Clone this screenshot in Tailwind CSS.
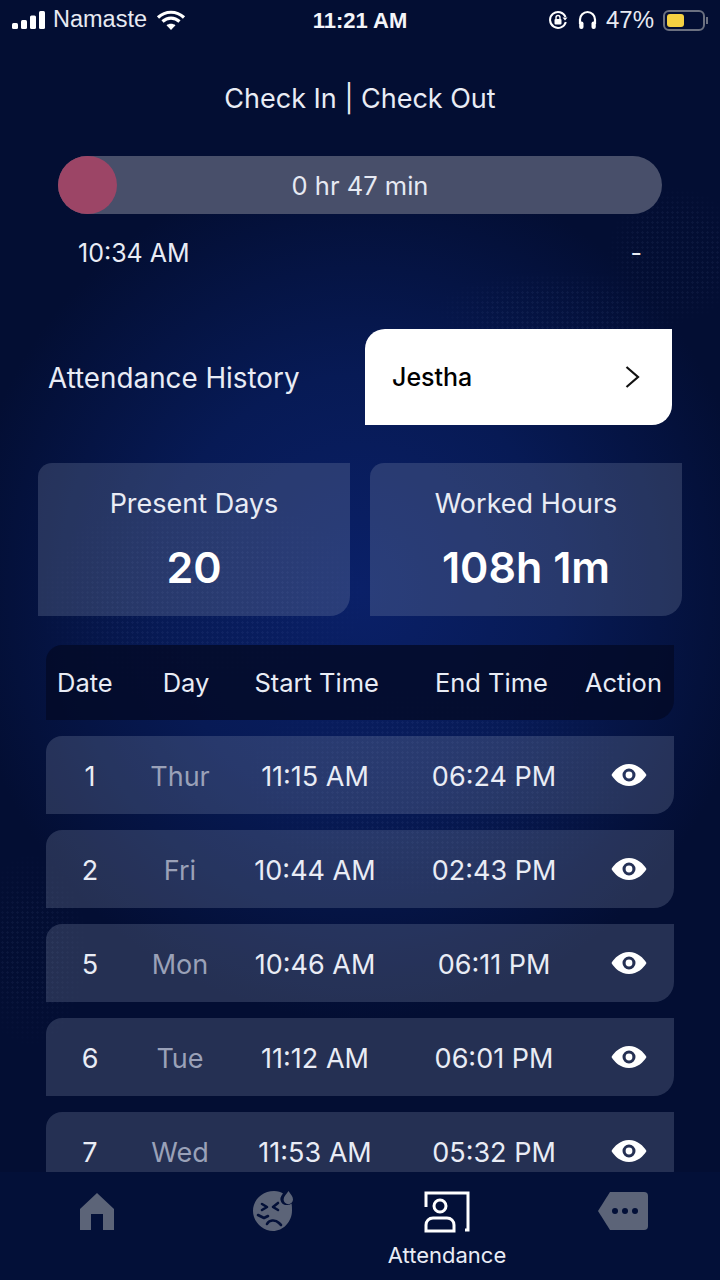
<!DOCTYPE html>
<html lang="en">
  <head>
    <meta charset="UTF-8" />
    <meta name="viewport" content="width=device-width, initial-scale=1.0" />
    <title>Attendance</title>
    <script src="https://cdn.jsdelivr.net/npm/@tailwindcss/browser@4"></script>
  </head>
  <body class="bg-[#030d30]">
    <div class="w-[720px] h-[1280px] relative overflow-hidden flex flex-col text-white font-['Inter',sans-serif] bg-[radial-gradient(ellipse_400px_430px_at_360px_590px,#0a2068_0%,#071a55_50%,#030e33_100%)]">
      <!-- faint dotted world map behind everything -->
      <div class="absolute inset-0 bg-[radial-gradient(circle,#8fa4e0_1.2px,transparent_1.3px)] bg-[size:5px_5px] opacity-[0.06] [mask-image:radial-gradient(ellipse_70px_70px_at_675px_255px,#000_60%,transparent),radial-gradient(ellipse_130px_40px_at_560px_310px,#000_50%,transparent),radial-gradient(ellipse_170px_110px_at_200px_600px,#000_50%,transparent),radial-gradient(ellipse_200px_120px_at_440px_780px,#000_50%,transparent),radial-gradient(ellipse_60px_100px_at_30px_950px,#000_40%,transparent)]"></div>

      <!-- status bar -->
      <div class="h-[40px] shrink-0 relative flex items-center px-[12px] text-[23.5px] font-['Liberation_Sans',sans-serif]">
        <svg width="34" height="20" viewBox="0 0 34 20" fill="#fff"><rect x="0" y="13" width="6" height="6" rx="1.5"/><rect x="9" y="10" width="6" height="9" rx="1.5"/><rect x="18" y="5.5" width="6" height="13.5" rx="1.5"/><rect x="27" y="1" width="6" height="18" rx="1.5"/></svg>
        <span class="ml-[7px] text-[#e8eaf2]">Namaste</span>
        <svg class="ml-[9px]" width="30" height="22" viewBox="0 0 30 22" fill="none" stroke="#fff" stroke-width="3.2"><path d="M2 8.500C9.500 1.500 20.500 1.500 28 8.500"/><path d="M6.500 12.500C11.500 8 18.500 8 23.500 12.500"/><path d="M15 21l-4.500-4.800c2.600-2 6.400-2 9 0z" fill="#fff" stroke="none"/></svg>
        <span class="absolute left-0 w-[720px] text-center font-bold text-[22px] text-[#f4f5fa]">11:21 AM</span>
        <div class="ml-auto flex items-center">
          <svg width="20" height="20" viewBox="0 0 20 20" fill="none" stroke="#fff" stroke-width="2"><path d="M17.500 7A8 8 0 1 0 17.800 12"/><path d="M14.500 7.500h5l-2.500 3z" fill="#fff" stroke="none"/><rect x="6.500" y="9" width="7" height="5.500" rx="1" fill="#fff" stroke="none"/><path d="M8 9V7.500a2 2 0 0 1 4 0V9" stroke-width="1.400"/></svg>
          <svg class="ml-[10px]" width="19" height="20" viewBox="0 0 19 20" fill="none" stroke="#fff" stroke-width="2.200"><path d="M2 14V9.500a7.500 7.500 0 0 1 15 0V14"/><rect x="1.200" y="11.500" width="4.300" height="7.500" rx="2" fill="#fff" stroke="none"/><rect x="13.500" y="11.500" width="4.300" height="7.500" rx="2" fill="#fff" stroke="none"/></svg>
          <span class="ml-[9px] text-[24px] text-[#e8eaf2]">47%</span>
          <div class="ml-[9px] w-[42px] h-[21px] rounded-[6px] border-2 border-[#6b7080] p-[2px]">
            <div class="w-[17px] h-full rounded-[3px] bg-[#f5d142]"></div>
          </div>
          <div class="ml-[1px] w-[2px] h-[7px] bg-[#6b7080]"></div>
        </div>
      </div>

      <h1 class="relative mt-[41px] h-[36px] text-center text-[27px] leading-[36px] font-normal text-[#e9ecf5]">Check In | Check Out</h1>

      <!-- slider -->
      <div class="mt-[39px] mx-[58px] h-[58px] shrink-0 rounded-full bg-[#484f6a] relative flex items-center justify-center">
        <div class="absolute left-0 top-0 w-[59px] h-[58px] rounded-full bg-[#9c4566]"></div>
        <span class="relative top-[1px] text-[25.500px] text-[#e6e9f2]">0 hr 47 min</span>
      </div>
      <div class="relative mt-[24px] mx-[78px] h-[32px] flex justify-between items-center text-[25px] text-[#e9ecf5]">
        <span>10:34 AM</span><span>-</span>
      </div>

      <!-- history header -->
      <div class="relative mt-[59px] h-[96px] shrink-0 flex items-center pl-[48px]">
        <span class="w-[317px] pt-[3px] text-[27.800px] text-[#e9ecf5]">Attendance History</span>
        <div class="w-[307px] h-[96px] bg-white rounded-tl-[20px] rounded-br-[20px] flex items-center justify-between pl-[27px] pr-[32px] text-black">
          <span class="pt-[2px] text-[25px] font-medium">Jestha</span>
          <svg width="16" height="24" viewBox="0 0 16 24" fill="none" stroke="#111" stroke-width="2.200"><path d="M2.500 2l11.500 10L2.500 22"/></svg>
        </div>
      </div>

      <!-- summary cards -->
      <div class="relative mt-[38px] mx-[38px] h-[153px] shrink-0 grid grid-cols-[312px_312px] gap-[20px]">
        <div class="bg-[#8c96b4]/25 rounded-tl-[14px] rounded-br-[20px] flex flex-col items-center pt-[23px]">
          <span class="text-[27px] leading-[36px] text-[#e9ecf5]">Present Days</span>
          <span class="mt-[16px] text-[43px] leading-[58px] font-semibold">20</span>
        </div>
        <div class="bg-[#8c96b4]/25 rounded-tl-[14px] rounded-br-[20px] flex flex-col items-center pt-[23px]">
          <span class="text-[27px] leading-[36px] text-[#e9ecf5]">Worked Hours</span>
          <span class="mt-[16px] text-[43px] leading-[58px] font-semibold">108h 1m</span>
        </div>
      </div>

      <!-- table -->
      <div class="mt-[29px] mx-[46px] h-[75px] shrink-0 bg-[#040a28]/85 rounded-tl-[16px] rounded-br-[20px] flex items-center pt-[1px] whitespace-nowrap text-[25.500px] text-[#e9ecf5] relative">
        <span class="ml-[11px]">Date</span>
        <span class="ml-[50px]">Day</span>
        <span class="ml-[45px]">Start Time</span>
        <span class="ml-[56px]">End Time</span>
        <span class="ml-[37px]">Action</span>
      </div>

      <div class="relative mt-[16px] mx-[46px] h-[436px] overflow-hidden flex flex-col gap-[16px] shrink-0">
        <div class="h-[78px] shrink-0 bg-[#8c96b4]/25 rounded-tl-[16px] rounded-br-[20px] grid grid-cols-[88px_92px_178px_180px_90px] items-center text-center pt-[4px] text-[27px] text-[#e9ecf5]">
          <span>1</span><span class="text-[#9aa1b8]">Thur</span><span>11:15 AM</span><span>06:24 PM</span>
          <svg class="mx-auto mb-[4px]" width="36" height="24" viewBox="0 0 36 24"><path fill="#fff" fill-rule="evenodd" d="M18 1C9.500 1 3.500 7 .5 12c3 5 9 11 17.500 11s14.500-6 17.500-11C32.500 7 26.500 1 18 1zm0 4.500a6.500 6.500 0 1 1 0 13 6.500 6.500 0 0 1 0-13z"/><circle cx="18" cy="12" r="3.400" fill="#fff"/></svg>
        </div>
        <div class="h-[78px] shrink-0 bg-[#8c96b4]/25 rounded-tl-[16px] rounded-br-[20px] grid grid-cols-[88px_92px_178px_180px_90px] items-center text-center pt-[4px] text-[27px] text-[#e9ecf5]">
          <span>2</span><span class="text-[#9aa1b8]">Fri</span><span>10:44 AM</span><span>02:43 PM</span>
          <svg class="mx-auto mb-[4px]" width="36" height="24" viewBox="0 0 36 24"><path fill="#fff" fill-rule="evenodd" d="M18 1C9.500 1 3.500 7 .5 12c3 5 9 11 17.500 11s14.500-6 17.500-11C32.500 7 26.500 1 18 1zm0 4.500a6.500 6.500 0 1 1 0 13 6.500 6.500 0 0 1 0-13z"/><circle cx="18" cy="12" r="3.400" fill="#fff"/></svg>
        </div>
        <div class="h-[78px] shrink-0 bg-[#8c96b4]/25 rounded-tl-[16px] rounded-br-[20px] grid grid-cols-[88px_92px_178px_180px_90px] items-center text-center pt-[4px] text-[27px] text-[#e9ecf5]">
          <span>5</span><span class="text-[#9aa1b8]">Mon</span><span>10:46 AM</span><span>06:11 PM</span>
          <svg class="mx-auto mb-[4px]" width="36" height="24" viewBox="0 0 36 24"><path fill="#fff" fill-rule="evenodd" d="M18 1C9.500 1 3.500 7 .5 12c3 5 9 11 17.500 11s14.500-6 17.500-11C32.500 7 26.500 1 18 1zm0 4.500a6.500 6.500 0 1 1 0 13 6.500 6.500 0 0 1 0-13z"/><circle cx="18" cy="12" r="3.400" fill="#fff"/></svg>
        </div>
        <div class="h-[78px] shrink-0 bg-[#8c96b4]/25 rounded-tl-[16px] rounded-br-[20px] grid grid-cols-[88px_92px_178px_180px_90px] items-center text-center pt-[4px] text-[27px] text-[#e9ecf5]">
          <span>6</span><span class="text-[#9aa1b8]">Tue</span><span>11:12 AM</span><span>06:01 PM</span>
          <svg class="mx-auto mb-[4px]" width="36" height="24" viewBox="0 0 36 24"><path fill="#fff" fill-rule="evenodd" d="M18 1C9.500 1 3.500 7 .5 12c3 5 9 11 17.500 11s14.500-6 17.500-11C32.500 7 26.500 1 18 1zm0 4.500a6.500 6.500 0 1 1 0 13 6.500 6.500 0 0 1 0-13z"/><circle cx="18" cy="12" r="3.400" fill="#fff"/></svg>
        </div>
        <div class="h-[78px] shrink-0 bg-[#8c96b4]/25 rounded-tl-[16px] rounded-br-[20px] grid grid-cols-[88px_92px_178px_180px_90px] items-center text-center pt-[4px] text-[27px] text-[#e9ecf5]">
          <span>7</span><span class="text-[#9aa1b8]">Wed</span><span>11:53 AM</span><span>05:32 PM</span>
          <svg class="mx-auto mb-[4px]" width="36" height="24" viewBox="0 0 36 24"><path fill="#fff" fill-rule="evenodd" d="M18 1C9.500 1 3.500 7 .5 12c3 5 9 11 17.500 11s14.500-6 17.500-11C32.500 7 26.500 1 18 1zm0 4.500a6.500 6.500 0 1 1 0 13 6.500 6.500 0 0 1 0-13z"/><circle cx="18" cy="12" r="3.400" fill="#fff"/></svg>
        </div>
      </div>

      <!-- bottom nav -->
      <div class="flex-1 bg-[#031038] relative">
        <div class="absolute left-[80px] top-[21px]">
          <svg width="34" height="38" viewBox="0 0 34 38" fill="#5c6478"><path d="M17 0L34 16v21H23V21H11v16H0V16z"/></svg>
        </div>
        <div class="absolute left-[252px] top-[18px]">
          <svg width="44" height="42" viewBox="0 0 44 42"><path fill="#5c6478" d="M22 1C26 1 29 2 31 3.500 29 6 28 8 28.500 10c.5 3 3 5 6 5 2 0 3.500-.5 5-1.500 .5 2 .5 4.500 .5 7C40 32 31 41 21 41S1 32 1 21 10 1 22 1z"/><path fill="#5c6478" d="M36.500 1c2 3 4.500 5.500 4.500 8.500a4.700 4.700 0 0 1-9.400 0c0-3 2.900-5.500 4.900-8.500z"/><path fill="none" stroke="#031038" stroke-width="2.600" stroke-linecap="round" stroke-linejoin="round" d="M10 14l5 3-5 3M26 13l-5 4 5 3M6 25l6 3 4-2M15 34c2-4 8-5 12-1l2 2"/></svg>
        </div>
        <div class="absolute left-[347px] top-[19px] w-[200px] flex flex-col items-center">
          <svg width="46" height="42" viewBox="0 0 46 42" fill="none" stroke="#fff" stroke-width="3"><path d="M41 39h3V2H2v14"/><circle cx="16" cy="15" r="6"/><path d="M2 40v-6c0-4 3-7 7-7h14c4 0 7 3 7 7v6z"/></svg>
          <span class="mt-[8px] text-[22px] leading-[28px] text-[#e9ecf5]">Attendance</span>
        </div>
        <div class="absolute left-[598px] top-[20px]">
          <svg width="50" height="38" viewBox="0 0 50 38"><path fill="#5c6478" d="M12 0h34a4 4 0 0 1 4 4v30a4 4 0 0 1-4 4H12L0 19z"/><circle cx="17" cy="19" r="3" fill="#031038"/><circle cx="27" cy="19" r="3" fill="#031038"/><circle cx="37" cy="19" r="3" fill="#031038"/></svg>
        </div>
      </div>
    </div>
  </body>
</html>
